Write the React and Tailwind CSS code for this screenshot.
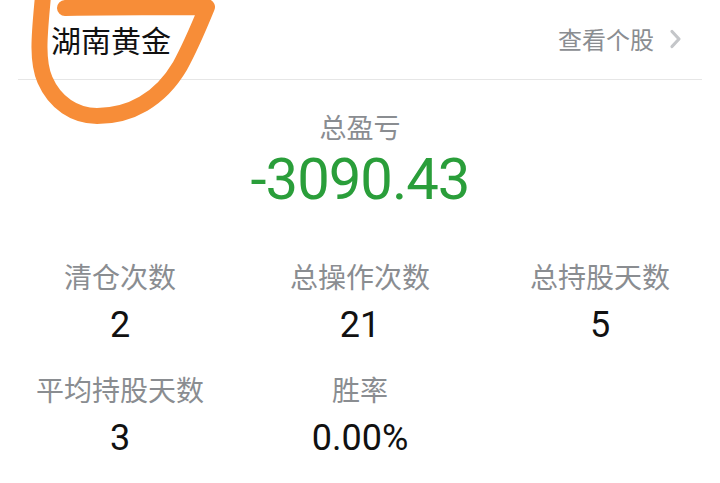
import React from 'react'

const stats = [
  { label: '清仓次数', value: '2' },
  { label: '总操作次数', value: '21' },
  { label: '总持股天数', value: '5' },
  { label: '平均持股天数', value: '3' },
  { label: '胜率', value: '0.00%' },
]

const App = () => {
  return (
    <div className="relative w-[720px] h-[483px] overflow-hidden bg-white" style={{ fontFamily: '"Noto Sans CJK SC", "Noto Sans", sans-serif' }}>

      {/* Header */}
      <div className="mx-[18px] h-[80px] flex items-center justify-between border-b border-[#e6e6e6] pb-[2px]">
        <h1 className="pl-[33px] text-[30px] leading-none text-[#111] font-normal">湖南黄金</h1>
        <div className="flex items-center pr-[20px] text-[#8a8d91]">
          <span className="text-[24px] leading-none">查看个股</span>
          <svg className="ml-[15px]" width="13" height="20" viewBox="0 0 13 20" fill="none">
            <path d="M3 2.5 L10 10 L3 17.5" stroke="#c4c6c9" strokeWidth="3.2" strokeLinecap="round" strokeLinejoin="round" />
          </svg>
        </div>
      </div>

      {/* Total */}
      <div className="flex flex-col items-center mt-[33px]">
        <p className="text-[27px] leading-none text-[#8a8d91]">总盈亏</p>
        <p className="mt-[10px] text-[58px] leading-none text-[#2a9e3a] tracking-[-1px]" style={{ fontFamily: 'Roboto, sans-serif' }}>-3090.43</p>
      </div>

      {/* Stats */}
      <div className="grid grid-cols-3 mt-[54px] gap-y-[32px]">
        {stats.map((s, i) => (
          <div key={i} className="flex flex-col items-center">
            <span className="text-[28px] leading-none text-[#8a8d91]">{s.label}</span>
            <span className="mt-[17px] text-[36px] leading-none text-[#111]" style={{ fontFamily: 'Roboto, sans-serif' }}>{s.value}</span>
          </div>
        ))}
      </div>

      {/* Orange hand-drawn annotation */}
      <svg className="absolute left-0 top-0 pointer-events-none" width="260" height="140" viewBox="0 0 260 140" fill="none">
        <path
          d="M43 -4 C40 30 36 60 45 80 C55 103 75 116 97 116 C130 116 160 100 180 66 C192 44 200 24 207 7 C160 7 110 7 65 8"
          stroke="#f78d38"
          strokeWidth="16"
          strokeLinecap="round"
          strokeLinejoin="round"
        />
      </svg>
    </div>
  )
}

export default App
